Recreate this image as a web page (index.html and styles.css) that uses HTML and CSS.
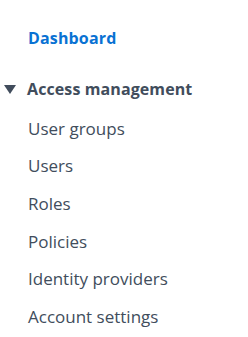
FILE: index.html
```html
<!DOCTYPE html>
<html lang="en">
<head>
    <meta charset="UTF-8">
    <meta name="viewport" content="width=device-width, initial-scale=1.0">
    <title>IAM</title>
    <link rel="stylesheet" href="styles.css">
</head>
<body>

<nav class="side-nav">
    <a class="nav-home" href="#">Dashboard</a>

    <div class="nav-section">
        <div class="section-header">
            <span class="caret"></span>
            <span class="section-title">Access management</span>
        </div>
        <ul class="nav-items">
            <li><a href="#">User groups</a></li>
            <li><a href="#">Users</a></li>
            <li><a href="#">Roles</a></li>
            <li><a href="#">Policies</a></li>
            <li><a href="#">Identity providers</a></li>
            <li><a href="#">Account settings</a></li>
        </ul>
    </div>
</nav>

</body>
</html>
```

FILE: styles.css
```css
body {
    font-family: "Open Sans", Arial, sans-serif;
    background-color: #fff;
    margin: 0;
    padding: 0;
    font-size: 16px;
    line-height: 20px;
    color: #414d5c;
}
.side-nav {
    padding-top: 28px;
}
.nav-home {
    display: block;
    padding-left: 28px;
    font-weight: 700;
    letter-spacing: 0.15px;
    color: #0972d3;
    text-decoration: none;
}
.nav-section {
    margin-top: 31px;
}
.section-header {
    display: flex;
    align-items: center;
    padding-left: 4px;
    padding-bottom: 11px;
}
.caret {
    width: 0;
    height: 0;
    border-left: 6px solid transparent;
    border-right: 6px solid transparent;
    border-top: 9px solid #414d5c;
    margin-right: 11px;
}
.section-title {
    font-weight: 700;
    letter-spacing: 0.1px;
}
.nav-items {
    list-style: none;
    margin: 0;
    padding: 0 0 0 28px;
    font-size: 17px;
}
.nav-items li {
    padding: 8.8px 0;
}
.nav-items a {
    color: #414d5c;
    text-decoration: none;
}
```
